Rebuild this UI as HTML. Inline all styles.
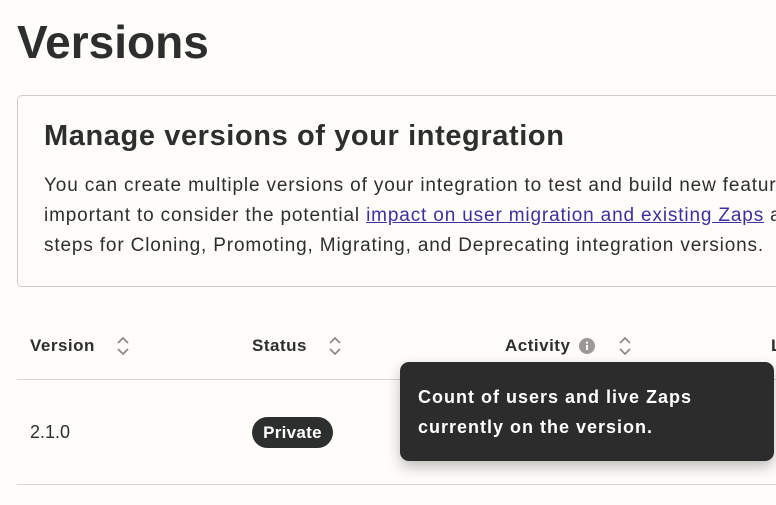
<!DOCTYPE html>
<html><head><style>
html,body{margin:0;width:776px;height:505px;overflow:hidden}
body{background:#fffdf9;font-family:"Liberation Sans",sans-serif;color:#2d2e2e}
#w{position:relative;width:776px;height:505px;overflow:hidden}
.a{position:absolute;white-space:nowrap}
h1{position:absolute;left:17px;top:15px;margin:0;font-size:46px;font-weight:bold;color:#2d2e2e}
.box{position:absolute;left:17px;top:95px;width:780px;height:190px;border:1px solid #cfccc8;border-right:none;border-radius:5px 0 0 5px;overflow:hidden}
.box h2{position:absolute;left:26px;top:24px;margin:0;font-size:29px;font-weight:bold;letter-spacing:0.6px;white-space:nowrap}
.box p{position:absolute;left:26px;top:75px;margin:0;font-size:19px;line-height:30px;white-space:nowrap;letter-spacing:0.85px}
a{color:#3d2f9e}
.th{font-weight:bold;font-size:17px;top:336px;letter-spacing:0.5px}
.line{position:absolute;left:17px;width:759px;height:1px;background:#d8d6d2}
.sort{position:absolute;top:334px}
.tip{position:absolute;left:400px;top:362px;width:374px;height:99px;background:#2b2c2b;border-radius:9px;box-shadow:0 6px 14px rgba(0,0,0,.25);color:#fff;font-weight:bold;font-size:18px;line-height:30px;box-sizing:border-box;padding:20px 0 0 18px;letter-spacing:1px}
.pill{position:absolute;left:252px;top:417px;width:81px;height:31px;border-radius:16px;background:#2d2e2e;color:#fff;font-weight:bold;font-size:17px;line-height:31px;text-align:center;letter-spacing:0.3px}
</style></head><body><div id="w">
<h1>Versions</h1>
<div class="box">
<h2>Manage versions of your integration</h2>
<p>You can create multiple versions of your integration to test and build new features. It is<br>important to consider the potential <a href="#">impact on user migration and existing Zaps</a> and<br>steps for Cloning, Promoting, Migrating, and Deprecating integration versions.</p>
</div>
<div class="a th" style="left:30px">Version</div>
<div class="a th" style="left:252px">Status</div>
<div class="a th" style="left:505px">Activity</div>
<div class="a th" style="left:771px">L</div>
<svg class="sort" style="left:115px" width="16" height="24" viewBox="0 0 16 24"><path d="M3 9l5-5 5 5M3 15l5 5 5-5" fill="none" stroke="#8a8a88" stroke-width="1.8"/></svg>
<svg class="sort" style="left:327px" width="16" height="24" viewBox="0 0 16 24"><path d="M3 9l5-5 5 5M3 15l5 5 5-5" fill="none" stroke="#8a8a88" stroke-width="1.8"/></svg>
<svg class="sort" style="left:617px" width="16" height="24" viewBox="0 0 16 24"><path d="M3 9l5-5 5 5M3 15l5 5 5-5" fill="none" stroke="#8a8a88" stroke-width="1.8"/></svg>
<svg style="position:absolute;left:579px;top:338px" width="16" height="16"><circle cx="8" cy="8" r="8" fill="#9a9996"/><rect x="7" y="7" width="2" height="5" fill="#fff"/><circle cx="8" cy="4.6" r="1.1" fill="#fff"/></svg>
<div class="line" style="top:379px"></div>
<div class="line" style="top:484px"></div>
<div class="a" style="left:30px;top:422px;font-size:18px">2.1.0</div>
<div class="pill">Private</div>
<div class="tip">Count of users and live Zaps<br>currently on the version.</div>
</div></body></html>
